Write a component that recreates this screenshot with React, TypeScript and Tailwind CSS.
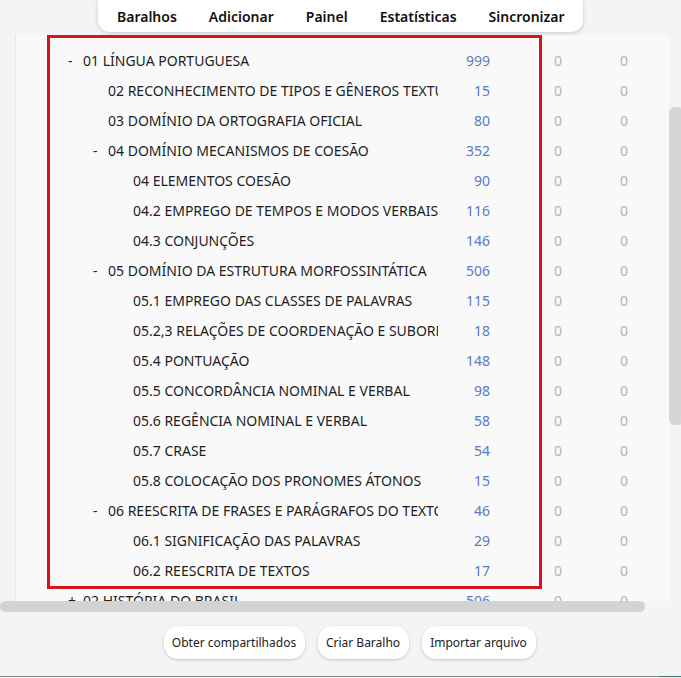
import React from "react";

type Row = { name: string; level: number; toggle?: string; count: number };

const rows: Row[] = [
  { name: "01 LÍNGUA PORTUGUESA", level: 0, toggle: "-", count: 999 },
  { name: "02 RECONHECIMENTO DE TIPOS E GÊNEROS TEXTUAIS", level: 1, count: 15 },
  { name: "03 DOMÍNIO DA ORTOGRAFIA OFICIAL", level: 1, count: 80 },
  { name: "04 DOMÍNIO MECANISMOS DE COESÃO", level: 1, toggle: "-", count: 352 },
  { name: "04 ELEMENTOS COESÃO", level: 2, count: 90 },
  { name: "04.2 EMPREGO DE TEMPOS E MODOS VERBAIS", level: 2, count: 116 },
  { name: "04.3 CONJUNÇÕES", level: 2, count: 146 },
  { name: "05 DOMÍNIO DA ESTRUTURA MORFOSSINTÁTICA", level: 1, toggle: "-", count: 506 },
  { name: "05.1 EMPREGO DAS CLASSES DE PALAVRAS", level: 2, count: 115 },
  { name: "05.2,3 RELAÇÕES DE COORDENAÇÃO E SUBORDINAÇÃO", level: 2, count: 18 },
  { name: "05.4 PONTUAÇÃO", level: 2, count: 148 },
  { name: "05.5 CONCORDÂNCIA NOMINAL E VERBAL", level: 2, count: 98 },
  { name: "05.6 REGÊNCIA NOMINAL E VERBAL", level: 2, count: 58 },
  { name: "05.7 CRASE", level: 2, count: 54 },
  { name: "05.8 COLOCAÇÃO DOS PRONOMES ÁTONOS", level: 2, count: 15 },
  { name: "06 REESCRITA DE FRASES E PARÁGRAFOS DO TEXTO", level: 1, toggle: "-", count: 46 },
  { name: "06.1 SIGNIFICAÇÃO DAS PALAVRAS", level: 2, count: 29 },
  { name: "06.2 REESCRITA DE TEXTOS", level: 2, count: 17 },
  { name: "02 HISTÓRIA DO BRASIL", level: 0, toggle: "+", count: 506 },
];

const padByLevel = ["pl-[52px]", "pl-[77px]", "pl-[102px]"];

function DeckRow({ row }: { row: Row }) {
  return (
    <div className="flex h-[30px] shrink-0 items-center text-[14px]">
      <div className={`flex w-[422px] shrink-0 overflow-hidden whitespace-nowrap ${padByLevel[row.level]}`}>
        <span className="w-[15px] shrink-0 text-[#222]">{row.toggle ?? ""}</span>
        <span className="text-[#1e1e1e]">{row.name}</span>
      </div>
      <div className="w-[52px] shrink-0 text-right text-[#5a7bc4]">{row.count}</div>
      <div className="w-[72px] shrink-0 text-right text-[#b4b4b4]">0</div>
      <div className="w-[66px] shrink-0 text-right text-[#b4b4b4]">0</div>
    </div>
  );
}

export default function App() {
  const navItems = ["Baralhos", "Adicionar", "Painel", "Estatísticas", "Sincronizar"];
  return (
    <div
      className="relative flex h-[678px] w-[681px] flex-col overflow-hidden bg-[#f4f4f4]"
      style={{ fontFamily: '"Noto Sans", "Open Sans", sans-serif' }}
    >
      {/* top nav */}
      <div className="flex h-[35px] shrink-0 pl-[98px]">
        <div className="flex h-[32px] w-[485px] items-center gap-[32px] rounded-b-[12px] bg-white pl-[19px] text-[14px] font-semibold text-[#111] shadow-[0_1px_4px_rgba(0,0,0,0.18)]">
          {navItems.map((n) => (
            <span key={n}>{n}</span>
          ))}
        </div>
      </div>

      {/* deck list with scrollbars */}
      <div className="flex h-[577px] shrink-0">
        <div className="flex w-[669px] shrink-0 flex-col">
          <div className="relative flex h-[566px] shrink-0 pl-[15px]">
            <div className="flex w-[654px] flex-col overflow-hidden border-l border-[#e6e6e6] bg-[#f9f9f9] pt-[10px]">
              {rows.map((r) => (
                <DeckRow key={r.name} row={r} />
              ))}
            </div>
            {/* highlight frame */}
            <div className="pointer-events-none absolute left-[47px] top-0 h-[554px] w-[495px] border-[3px] border-[#d4161c]" />
          </div>
          <div className="h-[11px] w-[645px] rounded-full bg-[#d3d3d3]" />
        </div>
        <div className="flex w-[12px] shrink-0 flex-col pt-[72px]">
          <div className="h-[318px] w-[12px] rounded-l-[6px] rounded-r-[2px] bg-[#d6d6d6]" />
        </div>
      </div>

      {/* bottom buttons */}
      <div className="flex flex-1 items-start justify-center gap-[13px] pt-[14px] pl-[18px]">
        <button className="h-[33px] w-[141px] rounded-[14px] bg-white text-[12px] text-[#222] shadow-[0_1px_3px_rgba(0,0,0,0.2)]">
          Obter compartilhados
        </button>
        <button className="h-[33px] w-[91px] rounded-[14px] bg-white text-[12px] text-[#222] shadow-[0_1px_3px_rgba(0,0,0,0.2)]">
          Criar Baralho
        </button>
        <button className="h-[33px] w-[114px] rounded-[14px] bg-white text-[12px] text-[#222] shadow-[0_1px_3px_rgba(0,0,0,0.2)]">
          Importar arquivo
        </button>
      </div>
      <div className="flex h-[2px] shrink-0">
        <div className="h-[1px] flex-1 bg-[#8c8c8c]" />
        <div className="h-[1px] w-[22px] bg-[#3f6f78]" />
      </div>
    </div>
  );
}
